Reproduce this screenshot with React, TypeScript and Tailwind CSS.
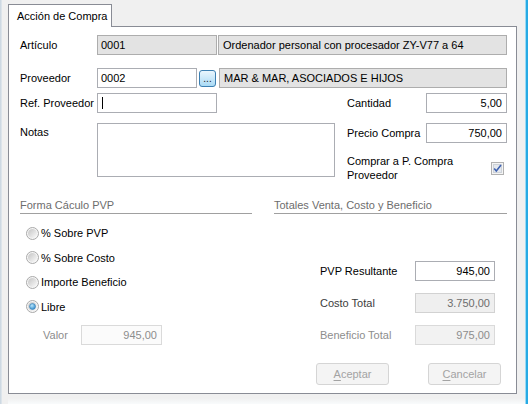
import clsx from 'clsx';

const font = "font-['Liberation_Sans',Arial,sans-serif]";

const boxStyles = {
  readonly: 'border-[#adadad] bg-[#e3e3e3] text-black',
  input: 'border-[#abadb3] bg-white text-black',
  dim: 'border-[#dadada] bg-[#fbfbfb] text-[#8d8d8d]',
  gray: 'border-[#d2d2d2] bg-[#efefef] text-[#6d6d6d]',
  grayDim: 'border-[#dadada] bg-[#f2f2f2] text-[#8d8d8d]',
};

type BoxProps = {
  variant: keyof typeof boxStyles;
  right?: boolean;
  className?: string;
  children?: React.ReactNode;
};

function Box({ variant, right, className, children }: BoxProps) {
  return (
    <div
      className={clsx(
        'flex h-5 items-center overflow-hidden whitespace-nowrap border px-[3px]',
        boxStyles[variant],
        right && 'justify-end pr-[4px]',
        className
      )}
    >
      {children}
    </div>
  );
}

function Radio({ checked }: { checked?: boolean }) {
  return (
    <svg width="13" height="13" viewBox="0 0 13 13" className="shrink-0">
      <defs>
        <linearGradient id="radioFill" x1="0" y1="0" x2="1" y2="1">
          <stop offset="0" stopColor="#c4c4c4" />
          <stop offset="1" stopColor="#fbfbfb" />
        </linearGradient>
        <radialGradient id="radioDot" cx="0.4" cy="0.35" r="0.7">
          <stop offset="0" stopColor="#b9e6fb" />
          <stop offset="1" stopColor="#2a86c9" />
        </radialGradient>
      </defs>
      <circle cx="6.5" cy="6.5" r="6" fill="#f6f6f6" stroke="#a9a9a9" />
      <circle cx="6.5" cy="6.5" r="4.5" fill="url(#radioFill)" />
      {checked && <circle cx="6.5" cy="6.5" r="3" fill="url(#radioDot)" stroke="#3a7fb5" strokeWidth="0.6" />}
    </svg>
  );
}

function Check() {
  return (
    <svg width="13" height="13" viewBox="0 0 13 13" className="shrink-0">
      <rect x="0.5" y="0.5" width="12" height="12" fill="#f4f4f4" stroke="#b1b1b1" />
      <rect x="2.5" y="2.5" width="8" height="8" fill="#e4e8ee" stroke="#cdd2d8" />
      <path d="M3.2 6.4 L5.3 8.9 L10 3.1" fill="none" stroke="#3f62b0" strokeWidth="1.6" />
    </svg>
  );
}

function Section({ title, children, className }: { title: string; children: React.ReactNode; className?: string }) {
  return (
    <div className={className}>
      <div className="border-b border-[#a0a0a0] pb-px text-[#6d6d6d]">{title}</div>
      {children}
    </div>
  );
}

function DisabledButton({ first, rest }: { first: string; rest: string }) {
  return (
    <div className="flex h-[22px] w-[73px] items-center justify-center rounded-[3px] border border-[#d5d5d5] bg-[#f4f4f4] text-[#a3a3a3]">
      <span className="underline underline-offset-2">{first}</span>
      {rest}
    </div>
  );
}

export default function App() {
  return (
    <div className={`flex h-[404px] w-[528px] bg-[#f0f0f0] text-[11px] leading-[14px] text-black ${font}`}>
      <div className="w-[2px] bg-gradient-to-r from-[#c7d4df] to-[#e3e9ee]" />

      <div className="flex flex-1 flex-col pl-[6px] pt-1">
        {/* Tab */}
        <div className="relative z-10 -mb-px flex h-[23px] w-[104px] items-center border border-b-0 border-[#898c95] bg-white pl-2">
          Acción de Compra
        </div>

        {/* Panel */}
        <div className="h-[368px] w-[509px] border border-[#898c95] bg-white pl-[11px] pr-[9px] pt-2">
          <div className="flex h-5 items-center">
            <div className="w-[77px]">Artículo</div>
            <Box variant="readonly" className="w-[120px]">0001</Box>
            <Box variant="readonly" className="ml-px flex-1 pl-[4px]">
              Ordenador personal con procesador ZY-V77 a 64
            </Box>
          </div>

          <div className="mt-[13px] flex h-5 items-center">
            <div className="w-[77px]">Proveedor</div>
            <Box variant="input" className="w-[100px]">0002</Box>
            <div className="ml-[2px] flex h-[17px] w-[17px] items-end justify-center rounded-[3px] border border-[#3c7fb1] bg-gradient-to-b from-[#eaf6fd] to-[#a9daf5] pb-[2px] text-[10px] leading-none text-[#1a1a1a]">
              ...
            </div>
            <Box variant="readonly" className="ml-[3px] flex-1 pl-[4px]">
              MAR &amp; MAR, ASOCIADOS E HIJOS
            </Box>
          </div>

          <div className="mt-[5px] flex">
            <div className="w-[327px]">
              <div className="flex h-5 items-center">
                <div className="w-[77px]">Ref. Proveedor</div>
                <Box variant="input" className="w-[120px] pl-[4px]">
                  <span className="h-[12px] w-px bg-black" />
                </Box>
              </div>
              <div className="mt-[10px] flex">
                <div className="w-[77px] pt-[2px]">Notas</div>
                <div className="h-[54px] w-[238px] border border-[#abadb3] bg-white" />
              </div>
            </div>

            <div className="flex-1">
              <div className="flex h-5 items-center justify-between">
                <span>Cantidad</span>
                <Box variant="input" right className="w-[81px]">5,00</Box>
              </div>
              <div className="mt-[10px] flex h-5 items-center justify-between">
                <span>Precio Compra</span>
                <Box variant="input" right className="w-[81px]">750,00</Box>
              </div>
              <div className="mt-[11px] flex items-center justify-between">
                <span className="w-[120px]">Comprar a P. Compra Proveedor</span>
                <div className="mr-[3px]">
                  <Check />
                </div>
              </div>
            </div>
          </div>

          <div className="mt-[16px] flex">
            <Section title="Forma Cáculo PVP" className="w-[232px]">
              <div className="mt-[7px]">
                <div className="flex h-[24px] items-center gap-[2px] pl-[6px]">
                  <Radio />
                  <span>% Sobre PVP</span>
                </div>
                <div className="flex h-[25px] items-center gap-[2px] pl-[6px]">
                  <Radio />
                  <span>% Sobre Costo</span>
                </div>
                <div className="flex h-[24px] items-center gap-[2px] pl-[6px]">
                  <Radio />
                  <span>Importe Beneficio</span>
                </div>
                <div className="flex h-[25px] items-center gap-[2px] pl-[6px]">
                  <Radio checked />
                  <span>Libre</span>
                </div>
              </div>
              <div className="mt-[6px] flex h-5 items-center pl-[23px]">
                <div className="w-[38px] text-[#8d8d8d]">Valor</div>
                <Box variant="dim" right className="w-[81px]">945,00</Box>
              </div>
            </Section>

            <Section title="Totales Venta, Costo y Beneficio" className="ml-[22px] flex-1">
              <div className="mt-[47px] flex h-5 items-center pl-[46px]">
                <div className="w-[95px]">PVP Resultante</div>
                <Box variant="input" right className="w-[80px]">945,00</Box>
              </div>
              <div className="mt-[12px] flex h-5 items-center pl-[46px]">
                <div className="w-[95px] text-[#3c3c3c]">Costo Total</div>
                <Box variant="gray" right className="w-[80px]">3.750,00</Box>
              </div>
              <div className="mt-[12px] flex h-5 items-center pl-[46px]">
                <div className="w-[95px] text-[#8d8d8d]">Beneficio Total</div>
                <Box variant="grayDim" right className="w-[80px]">975,00</Box>
              </div>
              <div className="ml-[42px] mt-[18px] flex gap-[39px]">
                <DisabledButton first="A" rest="ceptar" />
                <DisabledButton first="C" rest="ancelar" />
              </div>
            </Section>
          </div>
        </div>

        <div className="mt-auto h-[6px] bg-gradient-to-b from-[#f0f0f0] to-[#f9fbfc]" />
      </div>

      <div className="w-[3px] border-l border-[#9adaf3] bg-[#27aae4]" />
    </div>
  );
}
